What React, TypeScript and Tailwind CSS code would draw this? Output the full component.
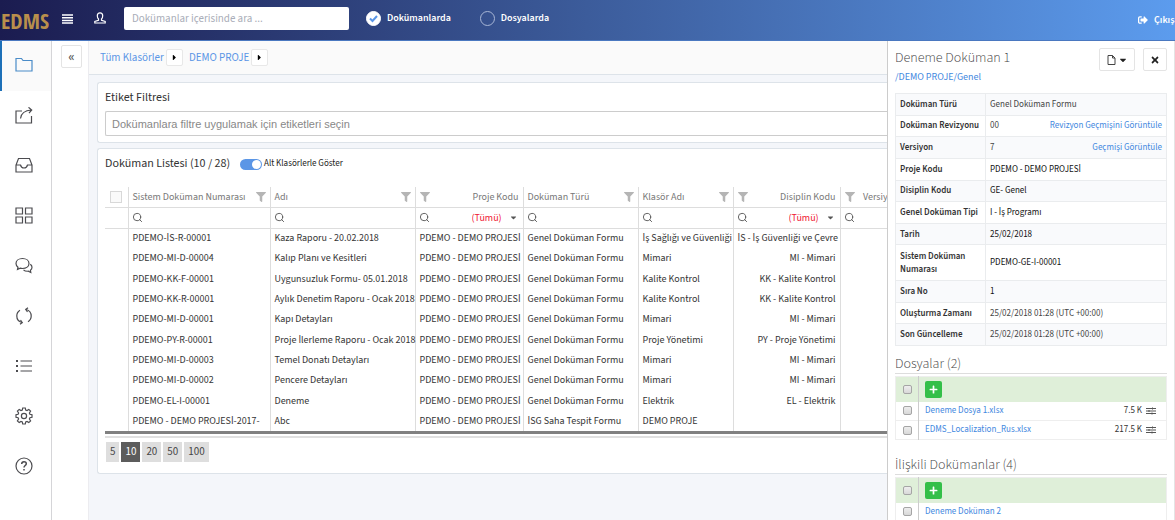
import type { ReactNode } from "react";
import { FaFilter, FaSignOutAlt, FaCaretDown, FaCaretRight, FaPlus, FaTimes } from "react-icons/fa";
import { FiSearch } from "react-icons/fi";

const NAV: { label: string; icon: ReactNode }[] = [
  {
    label: "Klasörler",
    icon: <path d="M1 1.500h5.500l1.500 2h9V14H1z" />,
  },
  {
    label: "Paylaş",
    icon: (
      <>
        <path d="M7 4H1v12h15.500V9" />
        <path d="M5.500 11.500c.5-5 4-8 11-8.500M13.500.3l3.200 2.700-2.700 3.200" />
      </>
    ),
  },
  {
    label: "Gelen Kutusu",
    icon: <path d="M3.500 1.500h11L17 8v7H1V8zM1 8h4.500c.5 2 1.700 3 3.500 3s3-1 3.500-3H17" />,
  },
  {
    label: "Panolar",
    icon: <path d="M1 1h6.500v6H1zM10.500 1H17v6h-6.500zM1 10h6.500v6H1zM10.500 10H17v6h-6.500z" />,
  },
  {
    label: "Mesajlar",
    icon: (
      <>
        <path d="M7.500 1.500c3.700 0 6.500 2.100 6.500 5s-2.800 5-6.500 5c-.8 0-1.600-.1-2.300-.3L2.500 12.500l.5-2.300C1.800 9.300 1 8 1 6.500c0-2.900 2.800-5 6.500-5z" />
        <path d="M15.300 7.300c1.100.8 1.700 1.800 1.700 3 0 1.300-.6 2.300-1.600 3l.4 2.200-2.500-1.300c-2 .2-3.700-.3-4.800-1.400" />
      </>
    ),
  },
  {
    label: "Eşitle",
    icon: (
      <>
        <path d="M7 15.500C4 14.700 1.800 12.200 1.800 9c0-2.500 1.200-4.500 3.200-5.700M11 2.500c3 .8 5.200 3.300 5.200 6.500 0 2.500-1.200 4.500-3.200 5.700" />
        <path d="M13 .8l-2.300 1.700L12.500 5M5 17.200l2.300-1.700L5.500 13" />
      </>
    ),
  },
  {
    label: "Listeler",
    icon: (
      <>
        <path d="M5.500 4H17M5.500 9H17M5.500 14H17" />
        <path d="M1 4h2M1 9h2M1 14h2" strokeWidth="2" />
      </>
    ),
  },
  {
    label: "Ayarlar",
    icon: (
      <>
        <circle cx="9" cy="9" r="2.600" />
        <path d="M7.700 1h2.600l.4 2.100 1.300.5 1.800-1.200 1.800 1.800-1.200 1.800.5 1.300 2.100.4v2.600l-2.100.4-.5 1.300 1.200 1.800-1.800 1.800-1.800-1.200-1.300.5-.4 2.100H7.700l-.4-2.100-1.300-.5-1.800 1.200-1.800-1.800L3.600 12l-.5-1.300L1 10.300V7.700l2.100-.4L3.600 6 2.400 4.200l1.800-1.800L6 3.600l1.300-.5z" />
      </>
    ),
  },
  {
    label: "Yardım",
    icon: (
      <>
        <circle cx="9" cy="9" r="8" />
        <path d="M6.700 7c0-1.400 1-2.300 2.300-2.300s2.300.9 2.300 2.100c0 1.600-2.300 1.900-2.300 3.700M9 12v1.600" strokeWidth="1.500" />
      </>
    ),
  },
];

const DOCUMENTS = [
  ["PDEMO-İS-R-00001", "Kaza Raporu - 20.02.2018", "PDEMO - DEMO PROJESİ", "Genel Doküman Formu", "İş Sağlığı ve Güvenliği", "İS - İş Güvenliği ve Çevre"],
  ["PDEMO-MI-D-00004", "Kalıp Planı ve Kesitleri", "PDEMO - DEMO PROJESİ", "Genel Doküman Formu", "Mimari", "MI - Mimari"],
  ["PDEMO-KK-F-00001", "Uygunsuzluk Formu- 05.01.2018", "PDEMO - DEMO PROJESİ", "Genel Doküman Formu", "Kalite Kontrol", "KK - Kalite Kontrol"],
  ["PDEMO-KK-R-00001", "Aylık Denetim Raporu - Ocak 2018", "PDEMO - DEMO PROJESİ", "Genel Doküman Formu", "Kalite Kontrol", "KK - Kalite Kontrol"],
  ["PDEMO-MI-D-00001", "Kapı Detayları", "PDEMO - DEMO PROJESİ", "Genel Doküman Formu", "Mimari", "MI - Mimari"],
  ["PDEMO-PY-R-00001", "Proje İlerleme Raporu - Ocak 2018", "PDEMO - DEMO PROJESİ", "Genel Doküman Formu", "Proje Yönetimi", "PY - Proje Yönetimi"],
  ["PDEMO-MI-D-00003", "Temel Donatı Detayları", "PDEMO - DEMO PROJESİ", "Genel Doküman Formu", "Mimari", "MI - Mimari"],
  ["PDEMO-MI-D-00002", "Pencere Detayları", "PDEMO - DEMO PROJESİ", "Genel Doküman Formu", "Mimari", "MI - Mimari"],
  ["PDEMO-EL-I-00001", "Deneme", "PDEMO - DEMO PROJESİ", "Genel Doküman Formu", "Elektrik", "EL - Elektrik"],
  ["PDEMO - DEMO PROJESİ-2017-", "Abc", "PDEMO - DEMO PROJESİ", "İSG Saha Tespit Formu", "DEMO PROJE", ""],
];

const COLUMNS = [
  { name: "Sistem Doküman Numarası", right: false, all: false },
  { name: "Adı", right: false, all: false },
  { name: "Proje Kodu", right: true, all: true },
  { name: "Doküman Türü", right: false, all: false },
  { name: "Klasör Adı", right: false, all: false },
  { name: "Disiplin Kodu", right: true, all: true },
  { name: "Versiyon", right: true, all: false },
];

const DETAILS = [
  { label: "Doküman Türü", value: "Genel Doküman Formu", dark: false },
  { label: "Doküman Revizyonu", value: "00", link: "Revizyon Geçmişini Görüntüle", dark: false },
  { label: "Versiyon", value: "7", link: "Geçmişi Görüntüle", dark: false },
  { label: "Proje Kodu", value: "PDEMO - DEMO PROJESİ", dark: true },
  { label: "Disiplin Kodu", value: "GE- Genel", dark: true },
  { label: "Genel Doküman Tipi", value: "I - İş Programı", dark: true },
  { label: "Tarih", value: "25/02/2018", dark: true },
  { label: "Sistem Doküman Numarası", value: "PDEMO-GE-I-00001", dark: true },
  { label: "Sıra No", value: "1", dark: true },
  { label: "Oluşturma Zamanı", value: "25/02/2018 01:28 (UTC +00:00)", dark: false },
  { label: "Son Güncelleme", value: "25/02/2018 01:28 (UTC +00:00)", dark: false },
];

const FILES = [
  { name: "Deneme Dosya 1.xlsx", size: "7.5 K" },
  { name: "EDMS_Localization_Rus.xlsx", size: "217.5 K" },
];

const RELATED = [{ name: "Deneme Doküman 2", size: "" }];

const PAGE_SIZES = [5, 10, 20, 50, 100];

function ScopeOption({ label, checked }: { label: string; checked?: boolean }) {
  return (
    <label className="flex items-center gap-[6px]">
      <span className="relative flex">
        <input
          type="radio"
          name="scope"
          defaultChecked={checked}
          className="peer size-[15px] appearance-none rounded-full border border-[#a9b7d6] checked:border-white checked:bg-white"
        />
        <svg viewBox="0 0 15 15" className="pointer-events-none absolute inset-0 hidden size-[15px] fill-none stroke-[#5a96e6] stroke-2 peer-checked:block">
          <path d="M4 7.500l2.500 2.500 4.500-5" />
        </svg>
      </span>
      <span className="text-[10px] font-semibold">{label}</span>
    </label>
  );
}

function Header() {
  return (
    <header className="flex h-[41px] items-center overflow-hidden border-b border-[#4a78c0] bg-linear-to-r from-[#1b1c50] via-[#3c5c9b] to-[#5c9cee] pb-1 text-white">
      <a href="#" className="w-[62px] pl-px pt-1 font-[family-name:'Open_Sans_Condensed','Open_Sans',sans-serif] text-[22px] leading-none font-bold text-[#b98f4c]">
        EDMS
      </a>
      <button type="button" aria-label="Menü" className="w-8">
        <svg viewBox="0 0 11 11" className="size-[11px] fill-none stroke-white stroke-[1.500]">
          <path d="M0 2h11M0 4.700h11M0 7.400h11M0 10.100h11" />
        </svg>
      </button>
      <button type="button" aria-label="Profil" className="w-[30px]">
        <svg viewBox="0 0 12 12" className="size-3 fill-none stroke-white stroke-[1.200]">
          <path d="M6 .8c1.700 0 2.700 1.200 2.700 2.900 0 1.500-.6 2.700-1.200 3.300v1.200l3.700 1.300v1.500H.8V9.500l3.700-1.300V7c-.6-.6-1.200-1.800-1.200-3.300C3.300 2 4.300.8 6 .8z" />
        </svg>
      </button>
      <input
        type="search"
        aria-label="Dokümanlar içerisinde ara"
        placeholder="Dokümanlar içerisinde ara ..."
        className="h-[23px] w-[225px] rounded-[2px] bg-white px-2 text-[11px] text-gray-700 placeholder:text-[#a9adb8]"
      />
      <div className="flex gap-[29px] pl-[17px]">
        <ScopeOption label="Dokümanlarda" checked />
        <ScopeOption label="Dosyalarda" />
      </div>
      <a href="#" className="ml-auto flex w-[37px] items-center gap-[6px] pt-1 text-[10px] font-semibold whitespace-nowrap">
        <FaSignOutAlt className="size-[10px] shrink-0" />
        Çıkış
      </a>
    </header>
  );
}

function Sidebar() {
  return (
    <nav className="flex w-[52px] shrink-0 flex-col border-r border-[#d5d5d8] bg-white">
      {NAV.map((item, i) => (
        <a
          key={item.label}
          href="#"
          aria-label={item.label}
          className={
            i === 0
              ? "flex h-[50px] items-center border-l-2 border-[#1d70b8] bg-[#fafafa] pl-[13px] text-[#4a8cc8]"
              : "flex h-[50px] items-center pl-[15px] text-[#4c4c50]"
          }
        >
          <svg viewBox="0 0 18 18" className="size-[18px] fill-none stroke-current stroke-[1.200]">
            {item.icon}
          </svg>
        </a>
      ))}
    </nav>
  );
}

function Breadcrumb() {
  return (
    <div className="flex h-[34px] items-center gap-[6px] border-b border-[#dde3e9] bg-[#fafafa] pl-[11px] text-[11px] text-[#5b96e6]">
      {["Tüm Klasörler", "DEMO PROJE"].map((name) => (
        <div key={name} className="flex items-center gap-[2px]">
          <a href="#">{name}</a>
          <button type="button" aria-label={name + " alt klasörleri"} className="flex h-[17px] w-[17px] items-center justify-center rounded-[2px] border border-[#e8e8e8] bg-white text-black">
            <FaCaretRight className="size-[9px]" />
          </button>
        </div>
      ))}
    </div>
  );
}

function DocumentTable() {
  return (
    <table className="h-[244px] w-[798px] table-fixed border-collapse text-[10px] leading-3 whitespace-nowrap text-[#333]">
      <colgroup>
        <col className="w-[23px]" />
        <col className="w-[142px]" />
        <col className="w-[145px]" />
        <col className="w-[108px]" />
        <col className="w-[115px]" />
        <col className="w-[95px]" />
        <col className="w-[107px]" />
        <col className="w-[63px]" />
      </colgroup>
      <thead className="text-[#777]">
        <tr className="h-5 border-b border-[#ddd]">
          <th className="border-r border-[#ddd] pl-[5px]">
            <input type="checkbox" aria-label="Tümünü seç" className="block size-3 appearance-none border border-[#d8d8d8] bg-[#fafafa]" />
          </th>
          {COLUMNS.map((col) => (
            <th key={col.name} className="border-r border-[#ddd] px-1 font-normal">
              <div className={col.right ? "flex flex-row-reverse items-center justify-between" : "flex items-center justify-between"}>
                {col.name}
                <FaFilter className="size-[10px] text-[#b5b5b5]" />
              </div>
            </th>
          ))}
        </tr>
        <tr className="h-[21px] border-b border-[#ddd]">
          <td className="border-r border-[#ddd]" />
          {COLUMNS.map((col) => (
            <td key={col.name} className="border-r border-[#ddd] px-[3px]">
              <div className="flex items-center justify-between">
                <FiSearch className="size-[11px] text-[#555]" />
                {col.all && (
                  <div className="flex items-center gap-[6px] pr-[2px]">
                    <select aria-label={col.name + " filtresi"} className="appearance-none text-[#f0142f]">
                      <option>(Tümü)</option>
                    </select>
                    <FaCaretDown className="size-[9px] text-[#555]" />
                  </div>
                )}
              </div>
            </td>
          ))}
        </tr>
      </thead>
      <tbody>
        {DOCUMENTS.map((row) => (
          <tr key={row[0]} className="h-5">
            <td className="border-r border-[#ddd]" />
            {COLUMNS.map((col, i) => (
              <td key={col.name} className={col.right ? "border-r border-[#ddd] px-1 text-right" : "border-r border-[#ddd] px-1"}>
                {row[i]}
              </td>
            ))}
          </tr>
        ))}
      </tbody>
    </table>
  );
}

function RowCheckbox({ label }: { label: string }) {
  return (
    <input
      type="checkbox"
      aria-label={label}
      className="mx-auto block size-[9px] appearance-none rounded-[2px] border border-[#a5a5a5] bg-linear-to-b from-[#eee] to-[#d8d8d8]"
    />
  );
}

function AttachmentList({ title, items }: { title: string; items: { name: string; size: string }[] }) {
  return (
    <section>
      <h3 className="border-b border-[#ddd] text-[14px] leading-[18px] font-light text-[#444]">{title}</h3>
      <table className="mt-[2px] w-full border-collapse border border-[#eee] text-[9px] leading-3">
        <tbody>
          <tr className="h-[25px] bg-[#dfefd9]">
            <td className="w-[23px] border-r border-[#ccc]">
              <RowCheckbox label={title + " tümünü seç"} />
            </td>
            <td className="pl-[6px]" colSpan={2}>
              <button type="button" aria-label="Ekle" className="flex size-[17px] items-center justify-center rounded-[2px] bg-[#34bf49] text-white">
                <FaPlus className="size-[9px]" />
              </button>
            </td>
          </tr>
          {items.map((item) => (
            <tr key={item.name} className="h-[19px] border-b border-[#eee]">
              <td className="border-r border-[#ccc]">
                <RowCheckbox label={item.name} />
              </td>
              <td className="pl-[6px]">
                <a href="#" className="text-[#3f88e0]">{item.name}</a>
              </td>
              <td className="pr-[10px]">
                {item.size && (
                  <div className="flex items-center justify-end gap-1 text-[#333]">
                    {item.size}
                    <svg viewBox="0 0 10 8" className="h-2 w-[10px] fill-none stroke-[#555]">
                      <path d="M0 1.500h10M0 4h10M0 6.500h10M6.500.5v2M3 3v2M6 5.500v2" />
                    </svg>
                  </div>
                )}
              </td>
            </tr>
          ))}
        </tbody>
      </table>
    </section>
  );
}

function DetailPanel() {
  return (
    <aside className="w-[288px] shrink-0 border-l border-[#ccc] bg-white">
      <div className="h-full border-r border-[#e4e4e4] px-[7px]">
        <div className="flex items-start gap-2 pt-[7px]">
          <div className="mr-auto">
            <h2 className="text-[14px] leading-5 font-light text-[#444]">Deneme Doküman 1</h2>
            <a href="#" className="block text-[10px] leading-[18px] text-[#3f88e0]">/DEMO PROJE/Genel</a>
          </div>
          <button type="button" aria-label="Dosya işlemleri" className="flex h-[23px] w-9 items-center justify-center gap-[2px] rounded-[2px] border border-[#e4e4e4] text-[#222]">
            <svg viewBox="0 0 9 10" className="h-[10px] w-[9px] fill-none stroke-[#444]">
              <path d="M1 .5h4.500L8 3v6.500H1zM5.500.5V3H8" />
            </svg>
            <FaCaretDown className="size-[10px]" />
          </button>
          <button type="button" aria-label="Kapat" className="flex h-[23px] w-6 items-center justify-center rounded-[2px] border border-[#e4e4e4] text-[#222]">
            <FaTimes className="size-[10px]" />
          </button>
        </div>
        <table className="mt-[7px] h-[253px] w-full table-fixed border-collapse text-[9px] leading-[13px]">
          <tbody>
            {DETAILS.map((row) => (
              <tr key={row.label} className="border border-[#eaecee] odd:bg-[#f9fafc]">
                <th scope="row" className="w-[90px] border-r border-[#eaecee] px-1 py-[3px] text-left font-semibold text-[#333]">{row.label}</th>
                <td className={row.dark ? "px-1 py-[3px] text-[#111]" : "px-1 py-[3px] text-[#444]"}>
                  <div className="flex justify-between">
                    {row.value}
                    {row.link && <a href="#" className="text-[#3f88e0]">{row.link}</a>}
                  </div>
                </td>
              </tr>
            ))}
          </tbody>
        </table>
        <div className="flex flex-col gap-4 pt-[9px]">
          <AttachmentList title="Dosyalar (2)" items={FILES} />
          <AttachmentList title="İlişkili Dokümanlar (4)" items={RELATED} />
        </div>
      </div>
    </aside>
  );
}

export default function App() {
  return (
    <div lang="tr" className="flex h-screen flex-col overflow-hidden bg-[#f4f6fa] font-[family-name:'Source_Sans_3','Open_Sans',sans-serif] leading-4">
      <Header />
      <div className="flex min-h-0 flex-1">
        <Sidebar />
        <div className="w-[37px] shrink-0 border-r border-[#ececf0] bg-white pt-1 pl-[9px]">
          <button type="button" aria-label="Klasör ağacını aç" className="flex h-[23px] w-[21px] items-center justify-center rounded-[2px] border border-[#e4e4e4] text-[14px] font-semibold text-[#555]">
            «
          </button>
        </div>
        <main className="min-w-0 flex-1 overflow-hidden">
          <Breadcrumb />
          <div className="flex flex-col gap-[5px] pt-[7px] pl-2">
            <section className="rounded-l-[3px] border-y border-l border-[#dde3e9] bg-white pt-[6px] pb-[6px] pl-[7px]">
              <label htmlFor="tags" className="block text-[12px] leading-[18px] text-[#333]">Etiket Filtresi</label>
              <input
                id="tags"
                placeholder="Dokümanlara filtre uygulamak için etiketleri seçin"
                className="mt-1 h-[25px] w-full rounded-l-[2px] border-y border-l border-[#ccc] px-[6px] font-[family-name:'Liberation_Sans',Arial,sans-serif] text-[11px] placeholder:text-[#888]"
              />
            </section>
            <section className="rounded-l-[3px] border-y border-l border-[#dde3e9] bg-white pt-[6px] pb-[11px] pl-[7px]">
              <div className="flex items-center gap-[10px]">
                <h2 className="text-[12px] leading-[18px] text-[#333]">Doküman Listesi (10 / 28)</h2>
                <label className="flex items-center gap-[2px] text-[9px] text-[#222]">
                  <input
                    type="checkbox"
                    role="switch"
                    defaultChecked
                    className="flex h-[11px] w-[22px] appearance-none items-center justify-end rounded-full bg-[#5b96e6] px-[1px] before:size-[9px] before:rounded-full before:bg-white"
                  />
                  Alt Klasörlerle Göster
                </label>
              </div>
              <div className="mt-[14px] overflow-hidden border-b-2 border-[#e0e0e0] pb-[2px]">
                <DocumentTable />
                <div className="h-[3px] bg-[#808080]" />
              </div>
              <div className="mt-1 flex gap-[2px] pl-px">
                {PAGE_SIZES.map((size) => (
                  <button
                    key={size}
                    type="button"
                    className={
                      size === 10
                        ? "h-[20px] bg-[#5c5c5c] px-1 text-[11px] text-white"
                        : "h-[20px] bg-[#dedede] px-1 text-[11px] text-[#444]"
                    }
                  >
                    {size}
                  </button>
                ))}
              </div>
            </section>
          </div>
        </main>
        <DetailPanel />
      </div>
    </div>
  );
}
